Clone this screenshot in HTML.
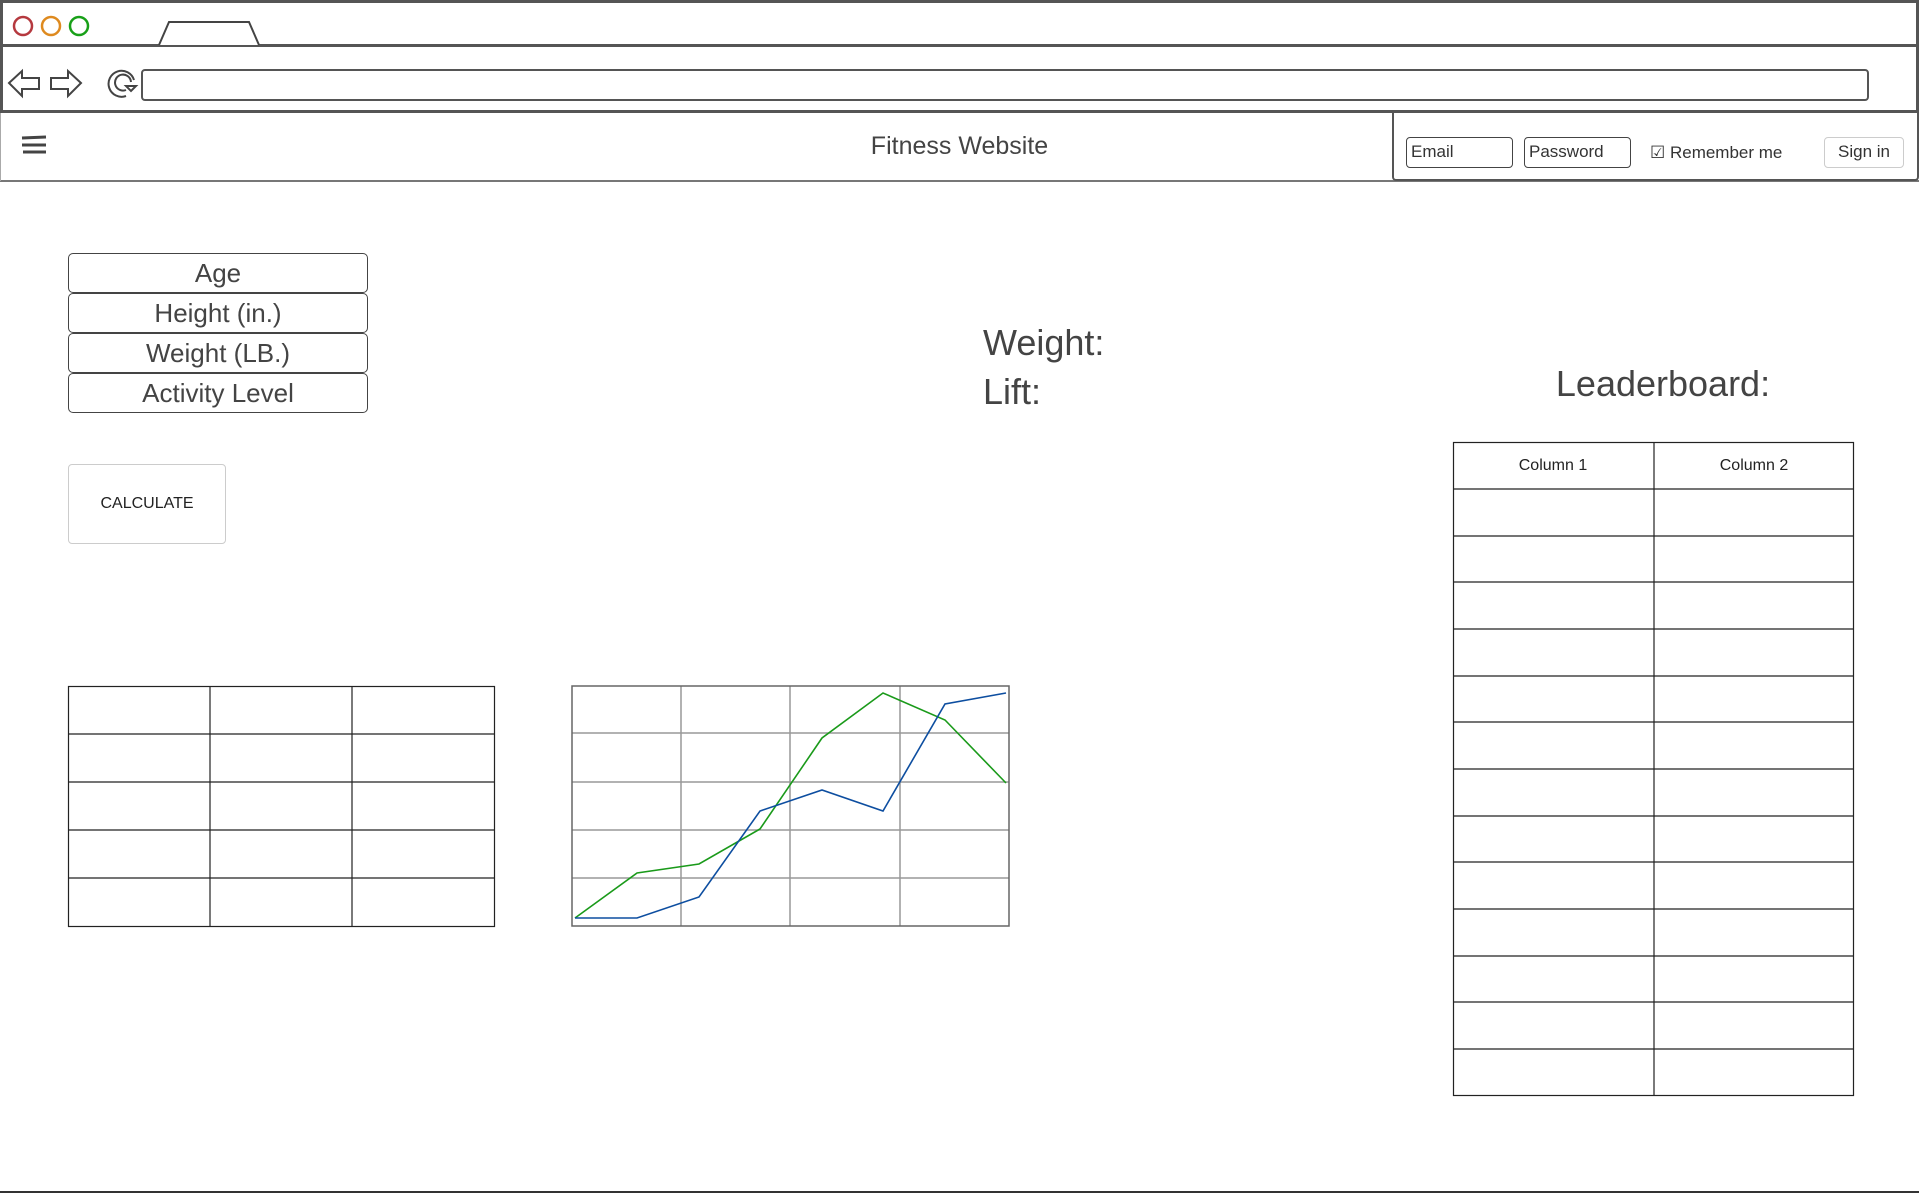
<!DOCTYPE html>
<html><head><meta charset="utf-8"><style>
*{margin:0;padding:0;box-sizing:border-box}
body{width:1919px;height:1194px;position:relative;background:#fff;font-family:"Liberation Sans",sans-serif;color:#333;overflow:hidden}
.a{position:absolute}
.inp{position:absolute;left:68px;width:300px;height:40px;border:1px solid #444;border-radius:5px;text-align:center;font-size:26px;line-height:38px;color:#444}
.sm{position:absolute;top:137px;height:31px;border:1px solid #444;border-radius:4px;font-size:17px;line-height:27px;padding-left:4px;color:#333}
table{border-collapse:collapse;position:absolute;table-layout:fixed}
td{border:1px solid #222;padding:0}
</style></head><body>
<div class="a" style="left:0;top:0;width:1919px;height:113px;border:3px solid #555;background:#fff"></div>
<div class="a" style="left:0;top:44px;width:1919px;height:3px;background:#555"></div>
<svg class="a" style="left:0;top:0" width="1919" height="181">
<circle cx="23" cy="26" r="9" fill="none" stroke="#b5393f" stroke-width="2.5"/>
<circle cx="51" cy="26" r="9" fill="none" stroke="#de8a1f" stroke-width="2.5"/>
<circle cx="79" cy="26" r="9" fill="none" stroke="#18a018" stroke-width="2.5"/>
<path d="M159 45 L169 22 L249 22 L259 45" fill="#fff" stroke="#444" stroke-width="2"/>
<path d="M9 83 L22 71 L22 78 L39 78 L39 89 L22 89 L22 96 Z" fill="none" stroke="#444" stroke-width="2"/>
<path d="M81 83 L68 71 L68 78 L51 78 L51 89 L68 89 L68 96 Z" fill="none" stroke="#444" stroke-width="2"/>
<path d="M126 96 A13 13 0 1 1 134 80 M126 90 A8 8 0 1 1 131 82" fill="none" stroke="#444" stroke-width="2"/>
<path d="M126 86 L136 86 L131 91 Z" fill="none" stroke="#444" stroke-width="2"/>
<rect x="142" y="70" width="1726" height="30" rx="3" fill="#fff" stroke="#555" stroke-width="2"/>
<path d="M22 138 L46 137 M22 145 L46 145 M23 152 L46 152" stroke="#444" stroke-width="3"/>
</svg>
<div class="a" style="left:0;top:180px;width:1919px;height:2px;background:#777"></div>
<div class="a" style="left:0;top:113px;width:1px;height:68px;background:#aaa"></div>
<div class="a" style="left:0;top:132px;width:1919px;text-align:center;font-size:25px;color:#444">Fitness Website</div>
<div class="a" style="left:1392px;top:111px;width:527px;height:70px;border:2px solid #555;border-radius:0 0 4px 4px;background:#fff"></div>
<div class="sm" style="left:1406px;width:107px">Email</div>
<div class="sm" style="left:1524px;width:107px">Password</div>
<div class="a" style="left:1650px;top:143px;font-size:17px;color:#333">☑ Remember me</div>
<div class="sm" style="left:1824px;width:80px;border-color:#ccc;text-align:center;padding:0">Sign in</div>

<div class="inp" style="top:253px">Age</div>
<div class="inp" style="top:293px">Height (in.)</div>
<div class="inp" style="top:333px">Weight (LB.)</div>
<div class="inp" style="top:373px">Activity Level</div>
<div class="a" style="left:68px;top:464px;width:158px;height:80px;border:1px solid #ccc;border-radius:4px;text-align:center;line-height:78px;font-size:16px;color:#222">CALCULATE</div>

<div class="a" style="left:983px;top:322px;font-size:36px;color:#444">Weight:</div>
<div class="a" style="left:983px;top:371px;font-size:36px;color:#444">Lift:</div>
<div class="a" style="left:1453px;top:363px;width:420px;text-align:center;font-size:36px;color:#444">Leaderboard:</div>

<svg class="a" style="left:0;top:0" width="1919" height="1194">
<g stroke="#222" stroke-width="1.2" fill="none">
<rect x="1453.5" y="442.5" width="400" height="653"/>
<path d="M1654 442V1096"/>
<path d="M1453 489H1854M1453 536H1854M1453 582H1854M1453 629H1854M1453 676H1854M1453 722H1854M1453 769H1854M1453 816H1854M1453 862H1854M1453 909H1854M1453 956H1854M1453 1002H1854M1453 1049H1854"/>
<rect x="68.5" y="686.5" width="426" height="240"/>
<path d="M210 686V927M352 686V927M68 734H495M68 782H495M68 830H495M68 878H495"/>
</g>
<text x="1553" y="470" font-size="16" text-anchor="middle" fill="#222" font-family="Liberation Sans">Column 1</text>
<text x="1754" y="470" font-size="16" text-anchor="middle" fill="#222" font-family="Liberation Sans">Column 2</text>
<g stroke="#999" stroke-width="1.5">
<path d="M681 686V926M790 686V926M900 686V926M572 733H1009M572 782H1009M572 830H1009M572 878H1009"/>
</g>
<rect x="572" y="686" width="437" height="240" fill="none" stroke="#666" stroke-width="1.5"/>
<polyline points="575,918 637,873 699,864 760,829 822,738 883,693 945,720 1006,783" fill="none" stroke="#1a9a1a" stroke-width="1.6"/>
<polyline points="575,918 637,918 699,897 760,811 822,790 883,811 945,704 1006,693" fill="none" stroke="#0d4ea0" stroke-width="1.6"/>
<path d="M0 1192H1919" stroke="#333" stroke-width="2"/>
</svg>
</body></html>
